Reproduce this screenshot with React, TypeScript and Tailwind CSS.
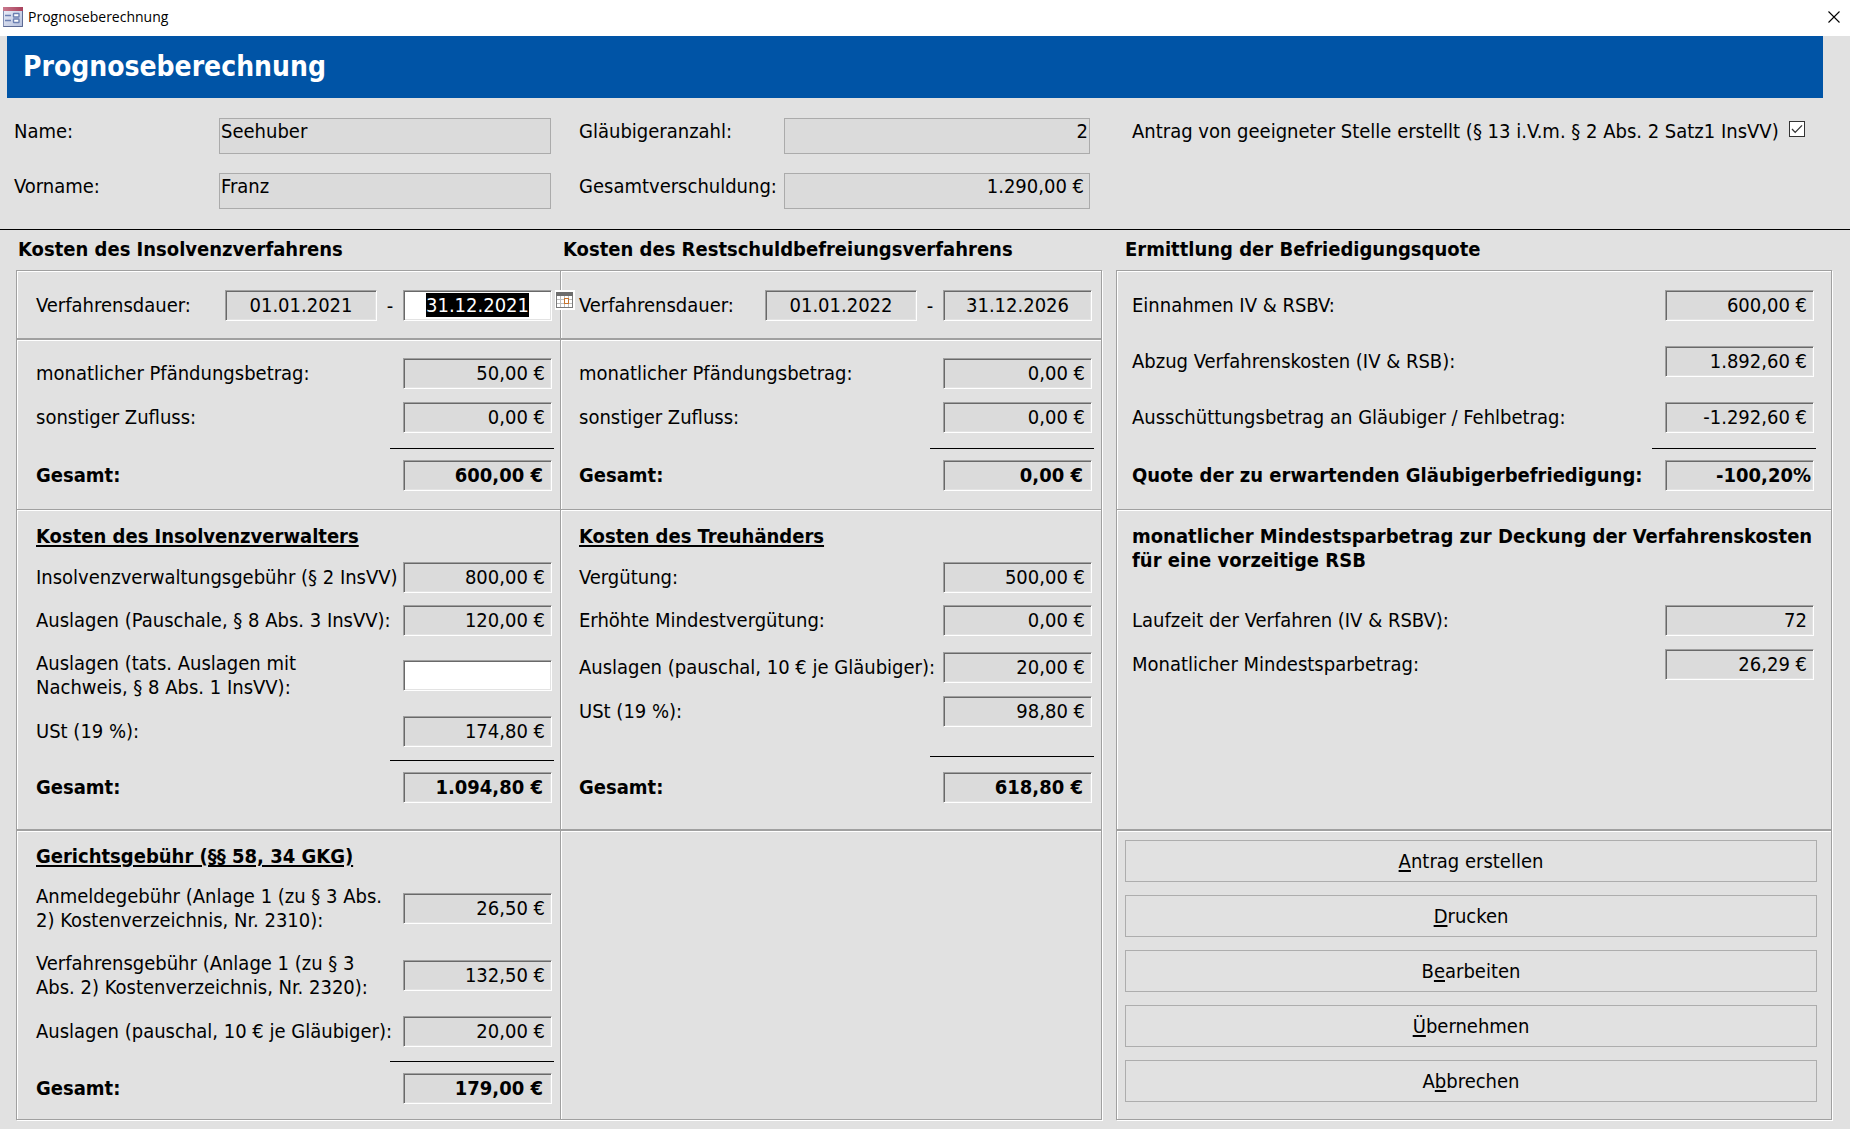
import { useEffect, useId, useRef } from "react";
import type { ReactNode } from "react";

function Panel({ className = "", children }: { className?: string; children?: ReactNode }) {
  return (
    <section
      className={`flex flex-col border border-[#a0a0a0] shadow-[1px_1px_0_#fff,inset_1px_1px_0_#fff] ${className}`}
    >
      {children}
    </section>
  );
}

const SUNKEN =
  "h-[31px] shrink-0 border border-t-[#a0a0a0] border-l-[#a0a0a0] border-r-white border-b-white pb-px shadow-[inset_1px_1px_0_#696969,inset_-1px_-1px_0_#e3e3e3] outline-none";

type RowProps = {
  label: ReactNode;
  value: string;
  bold?: boolean;
  editable?: boolean;
  flush?: boolean;
  className?: string;
};

function Row({ label, value, bold, editable, flush, className = "" }: RowProps) {
  const id = useId();
  return (
    <div className={`flex items-center justify-between ${bold ? "font-bold" : ""} ${className}`}>
      <label htmlFor={id} className={`whitespace-nowrap ${typeof label === "string" ? "pb-0.5" : ""}`}>
        {label}
      </label>
      <input
        id={id}
        type="text"
        readOnly={!editable}
        defaultValue={value}
        className={`w-[149px] text-right ${flush ? "pr-[2px]" : bold ? "pr-2" : "pr-[6px]"} ${editable ? "bg-white" : "bg-[#dbdbdb]"} ${SUNKEN}`}
      />
    </div>
  );
}

function SumLine({ className = "" }: { className?: string }) {
  return <div className={`-mr-0.5 h-px w-[164px] shrink-0 self-end bg-black ${className}`} />;
}

function CalendarIcon() {
  return (
    <svg width="20" height="20" viewBox="0 0 20 20" shapeRendering="crispEdges">
      <rect width="20" height="20" fill="#fff" />
      <rect x="1.5" y="2.5" width="16" height="15" fill="#fff" stroke="#7a7a7a" />
      <rect x="1" y="2" width="17" height="4" fill="#6d6d6d" />
      <path d="M5.5 6v11M13.5 6v11M9.5 6v11M2 9.5h15M2 13.5h15" stroke="#bdbdbd" fill="none" />
      <rect x="9.5" y="8.5" width="4" height="5" fill="#fff" stroke="#c8742c" />
    </svg>
  );
}

function DateRow({ from, to, active }: { from: string; to: string; active?: boolean }) {
  const id = useId();
  const end = useRef<HTMLInputElement>(null);
  useEffect(() => {
    if (active) {
      end.current?.focus();
      end.current?.select();
    }
  }, [active]);
  return (
    <div className="flex items-center">
      <label htmlFor={id} className="flex-1 pb-0.5 whitespace-nowrap">
        Verfahrensdauer:
      </label>
      <input id={id} readOnly defaultValue={from} className={`w-[152px] bg-[#dbdbdb] text-center ${SUNKEN}`} />
      <span className="w-[26px] text-center">-</span>
      <div className="relative flex">
        <input
          ref={end}
          aria-label="Verfahrensdauer bis"
          readOnly={!active}
          defaultValue={to}
          className={`w-[149px] text-center selection:bg-black selection:text-white ${active ? "bg-white" : "bg-[#dbdbdb]"} ${SUNKEN}`}
        />
        {active && (
          <button aria-label="Kalender" className="absolute top-0 left-full z-10 ml-[3px]">
            <CalendarIcon />
          </button>
        )}
      </div>
    </div>
  );
}

function HeadField({ label, value, inputClass }: { label: string; value: string; inputClass: string }) {
  const id = useId();
  return (
    <div className="flex items-start justify-between">
      <label htmlFor={id} className="shrink-0 whitespace-nowrap pt-px">
        {label}
      </label>
      <input
        id={id}
        readOnly
        defaultValue={value}
        className={`h-9 min-w-0 border border-[#ababab] bg-[#dbdbdb] pb-[10px] outline-none ${inputClass}`}
      />
    </div>
  );
}

function Action({ pre = "", hot, post }: { pre?: string; hot: string; post: string }) {
  return (
    <button className="h-[42px] border border-[#adadad] bg-[#e1e1e1] text-center">
      {pre}
      <span className="underline underline-offset-2">{hot}</span>
      {post}
    </button>
  );
}

function FormIcon() {
  return (
    <svg width="20" height="20" viewBox="0 0 20 20">
      <defs>
        <linearGradient id="body" x1="0" y1="0" x2="1" y2="1">
          <stop offset="0" stopColor="#eef1fa" />
          <stop offset="1" stopColor="#b4bedb" />
        </linearGradient>
        <linearGradient id="caption" x1="0" y1="0" x2="1" y2="0">
          <stop offset="0" stopColor="#c9788c" />
          <stop offset="1" stopColor="#a8415c" />
        </linearGradient>
      </defs>
      <rect x="0.5" y="0.5" width="19" height="19" fill="url(#body)" stroke="#8390b4" />
      <path d="M19.5 4v15.500h-19" stroke="#5c6a94" fill="none" />
      <rect x="0" y="0" width="20" height="4" fill="url(#caption)" />
      <path d="M2 8.500h6M2 13.500h6" stroke="#6c80b2" strokeWidth="1.400" />
      <rect x="10.500" y="6.500" width="5.500" height="3.500" rx="0.500" fill="#fff" stroke="#6c80b2" strokeWidth="1.400" />
      <rect x="10.500" y="12" width="5.500" height="3.500" rx="0.500" fill="#fff" stroke="#6c80b2" strokeWidth="1.400" />
    </svg>
  );
}

export default function App() {
  return (
    <div className="min-h-screen bg-[#e1e1e1] font-['DejaVu_Sans_Condensed','DejaVu_Sans',sans-serif] text-[20px] leading-6 text-black">
      <header className="flex h-9 items-center justify-between bg-white pr-2.5 pl-[3px]">
        <div className="flex items-center gap-[5px] pb-0.5">
          <FormIcon />
          <span className="font-['Open_Sans',sans-serif] text-[14px] leading-5">Prognoseberechnung</span>
        </div>
        <button aria-label="Schließen" className="pb-0.5">
          <svg width="12" height="12" viewBox="0 0 12 12">
            <path d="M0.5 0.5l11 11M11.5 0.5l-11 11" stroke="#000" strokeWidth="1.1" fill="none" />
          </svg>
        </button>
      </header>

      <div className="mr-[27px] ml-[7px] flex h-[62px] items-center bg-[#0054a6] pl-4">
        <h1 className="text-[28px] leading-8 font-bold text-white">Prognoseberechnung</h1>
      </div>

      <div className="grid grid-cols-[546fr_542fr_730fr] border-b border-black pt-5 pr-[18px] pb-5 pl-[14px]">
        <div className="flex flex-col gap-[19px] pr-[9px]">
          <HeadField label="Name:" value="Seehuber" inputClass="w-[332px] pl-px" />
          <HeadField label="Vorname:" value="Franz" inputClass="w-[332px] pl-px" />
        </div>
        <div className="flex flex-col gap-[19px] pr-3 pl-[19px]">
          <HeadField label="Gläubigeranzahl:" value="2" inputClass="w-[306px] pr-px text-right" />
          <HeadField label="Gesamtverschuldung:" value="1.290,00 €" inputClass="w-[306px] pr-[5px] text-right" />
        </div>
        <div className="pt-px pl-[30px]">
          <label className="inline-flex items-center gap-2.5 whitespace-nowrap">
            Antrag von geeigneter Stelle erstellt (§ 13 i.V.m. § 2 Abs. 2 Satz1 InsVV)
            <span className="mb-1 grid h-4 w-4 place-items-center">
              <input
                type="checkbox"
                defaultChecked
                className="peer col-start-1 row-start-1 h-4 w-4 appearance-none border border-[#333] bg-white"
              />
              <svg
                width="12"
                height="12"
                viewBox="0 0 12 12"
                className="pointer-events-none invisible col-start-1 row-start-1 peer-checked:visible"
              >
                <path d="M1 6l3.2 3.400L11 2.400" stroke="#333" strokeWidth="1.300" fill="none" />
              </svg>
            </span>
          </label>
        </div>
      </div>

      <main className="grid grid-cols-[1086fr_716fr] gap-x-[14px] pr-[18px] pb-[9px] pl-4">
        <div className="grid grid-cols-[544fr_542fr]">
          <h2 className="pt-[7px] pb-[9px] pl-0.5 font-bold whitespace-nowrap">Kosten des Insolvenzverfahrens</h2>
          <h2 className="pt-[7px] pb-[9px] pl-[3px] font-bold whitespace-nowrap">Kosten des Restschuldbefreiungsverfahrens</h2>

          <Panel className="border-r-0 pt-[19px] pr-2 pb-[17px] pl-[19px]">
            <DateRow from="01.01.2021" to="31.12.2021" active />
          </Panel>
          <Panel className="pt-[19px] pr-[9px] pb-[17px] pl-[18px]">
            <DateRow from="01.01.2022" to="31.12.2026" />
          </Panel>

          <Panel className="border-r-0 border-b-0 pt-[18px] pr-2 pb-[18px] pl-[19px]">
            <Row label="monatlicher Pfändungsbetrag:" value="50,00 €" />
            <Row label="sonstiger Zufluss:" value="0,00 €" className="mt-[13px]" />
            <SumLine className="mt-[15px]" />
            <Row label="Gesamt:" value="600,00 €" bold className="mt-[11px]" />
          </Panel>
          <Panel className="border-b-0 pt-[18px] pr-[9px] pb-[18px] pl-[18px]">
            <Row label="monatlicher Pfändungsbetrag:" value="0,00 €" />
            <Row label="sonstiger Zufluss:" value="0,00 €" className="mt-[13px]" />
            <SumLine className="mt-[15px]" />
            <Row label="Gesamt:" value="0,00 €" bold className="mt-[11px]" />
          </Panel>

          <Panel className="border-r-0 pt-[14px] pr-2 pb-[26px] pl-[19px]">
            <h3 className="font-bold underline decoration-2 underline-offset-2">Kosten des Insolvenzverwalters</h3>
            <Row label="Insolvenzverwaltungsgebühr (§ 2 InsVV)" value="800,00 €" className="mt-[14px]" />
            <Row label="Auslagen (Pauschale, § 8 Abs. 3 InsVV):" value="120,00 €" className="mt-3" />
            <Row
              label={<>Auslagen (tats. Auslagen mit<br />Nachweis, § 8 Abs. 1 InsVV):</>}
              value=""
              editable
              className="mt-[15px]"
            />
            <Row label="USt (19 %):" value="174,80 €" className="mt-[17px]" />
            <SumLine className="mt-[13px]" />
            <Row label="Gesamt:" value="1.094,80 €" bold className="mt-[11px]" />
          </Panel>
          <Panel className="pt-[14px] pr-[9px] pb-[26px] pl-[18px]">
            <h3 className="font-bold underline decoration-2 underline-offset-2">Kosten des Treuhänders</h3>
            <Row label="Vergütung:" value="500,00 €" className="mt-[14px]" />
            <Row label="Erhöhte Mindestvergütung:" value="0,00 €" className="mt-3" />
            <Row label="Auslagen (pauschal, 10 € je Gläubiger):" value="20,00 €" className="mt-4" />
            <Row label="USt (19 %):" value="98,80 €" className="mt-[13px]" />
            <SumLine className="mt-[29px]" />
            <Row label="Gesamt:" value="618,80 €" bold className="mt-[15px]" />
          </Panel>

          <Panel className="border-r-0 pt-[13px] pr-2 pb-[15px] pl-[19px]">
            <h3 className="font-bold underline decoration-2 underline-offset-2">Gerichtsgebühr (§§ 58, 34 GKG)</h3>
            <Row
              label={<>Anmeldegebühr (Anlage 1 (zu § 3 Abs.<br />2) Kostenverzeichnis, Nr. 2310):</>}
              value="26,50 €"
              className="mt-4"
            />
            <Row
              label={<>Verfahrensgebühr (Anlage 1 (zu § 3<br />Abs. 2) Kostenverzeichnis, Nr. 2320):</>}
              value="132,50 €"
              className="mt-[19px]"
            />
            <Row label="Auslagen (pauschal, 10 € je Gläubiger):" value="20,00 €" className="mt-[17px]" />
            <SumLine className="mt-[14px]" />
            <Row label="Gesamt:" value="179,00 €" bold className="mt-[11px]" />
          </Panel>
          <Panel />
        </div>

        <div className="flex flex-col">
          <h2 className="pt-[7px] pb-[9px] pl-[9px] font-bold whitespace-nowrap">Ermittlung der Befriedigungsquote</h2>
          <Panel className="border-b-0 pt-[19px] pr-[17px] pb-[18px] pl-[15px]">
            <Row label="Einnahmen IV & RSBV:" value="600,00 €" />
            <Row label="Abzug Verfahrenskosten (IV & RSB):" value="1.892,60 €" className="mt-[25px]" />
            <Row label="Ausschüttungsbetrag an Gläubiger / Fehlbetrag:" value="-1.292,60 €" className="mt-[25px]" />
            <SumLine className="mt-[15px]" />
            <Row label="Quote der zu erwartenden Gläubigerbefriedigung:" value="-100,20%" bold flush className="mt-[11px]" />
          </Panel>
          <Panel className="flex-1 pt-[14px] pr-[17px] pl-[15px]">
            <h3 className="font-bold whitespace-nowrap">
              monatlicher Mindestsparbetrag zur Deckung der Verfahrenskosten
              <br />
              für eine vorzeitige RSB
            </h3>
            <Row label="Laufzeit der Verfahren (IV & RSBV):" value="72" className="mt-[33px]" />
            <Row label="Monatlicher Mindestsparbetrag:" value="26,29 €" className="mt-[13px]" />
          </Panel>
          <Panel className="gap-[13px] pt-[9px] pr-[14px] pb-[17px] pl-2">
            <Action hot="A" post="ntrag erstellen" />
            <Action hot="D" post="rucken" />
            <Action pre="B" hot="e" post="arbeiten" />
            <Action hot="Ü" post="bernehmen" />
            <Action pre="A" hot="b" post="brechen" />
          </Panel>
        </div>
      </main>
    </div>
  );
}
